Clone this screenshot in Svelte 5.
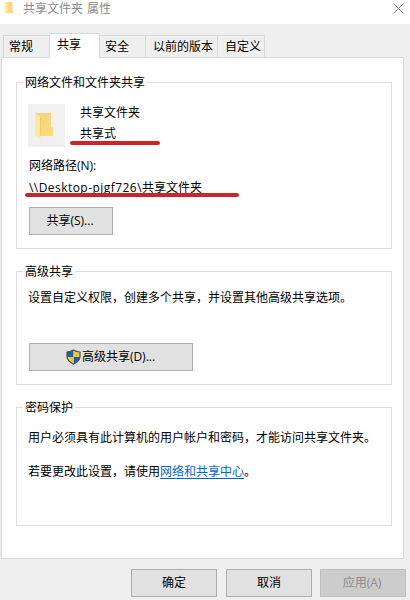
<script>
  const tabs = [
    { label: '常规', width: 46 },
    { label: '共享', width: 51, active: true },
    { label: '安全', width: 46 },
    { label: '以前的版本', width: 72 },
    { label: '自定义', width: 47 }
  ];
</script>

<div class="window">
  <header class="titlebar">
    <svg class="title-icon" width="10" height="14" viewBox="0 0 10 14">
      <path d="M2 1h6.500v8l1 .5V12H2z" fill="#f9d880" />
      <path d="M0.500 1l2.800 1.800v10.700L0.500 11.600z" fill="#fdeaa9" />
    </svg>
    <h1>共享文件夹 属性</h1>
    <svg class="close" width="11" height="11" viewBox="0 0 11 11">
      <path d="M.5.5l10 10M10.5.5l-10 10" stroke="#858585" stroke-width="1" fill="none" />
    </svg>
  </header>

  <nav class="tabs">
    {#each tabs as tab}
      <div class="tab" class:active={tab.active} style:width="{tab.width}px">{tab.label}</div>
    {/each}
  </nav>

  <main class="panel">
    <fieldset class="network">
      <legend>网络文件和文件夹共享</legend>
      <div class="folder">
        <div class="thumb">
          <svg width="37" height="43" viewBox="0 0 37 43">
            <defs>
              <linearGradient id="fold" x1="0" y1="0" x2="1" y2="1">
                <stop offset="0" stop-color="#f0d080" />
                <stop offset="1" stop-color="#ffdc77" />
              </linearGradient>
            </defs>
            <path d="M7.500 9H23v13.500l2.200 1.500V32H12L7.500 29z" fill="url(#fold)" />
            <path d="M7.200 9l5.300 3.500v23L7.200 31.500z" fill="#ffe9a2" />
            <path d="M12.500 13v18.500" stroke="#e8c76c" stroke-width=".8" />
          </svg>
        </div>
        <div class="names">
          <div>共享文件夹</div>
          <div class="marked">共享式<i class="stroke short"></i></div>
        </div>
      </div>
      <div class="label">网络路径(N):</div>
      <div class="path marked"><span class="host">\\Desktop-pjgf726\</span>共享文件夹<i class="stroke long"></i></div>
      <button class="share">共享(S)...</button>
    </fieldset>

    <fieldset class="advanced">
      <legend>高级共享</legend>
      <p>设置自定义权限，创建多个共享，并设置其他高级共享选项。</p>
      <button class="adv">
        <svg width="15" height="16" viewBox="0 0 15 16">
          <defs>
            <clipPath id="shield">
              <path d="M7.500 1C5.800 2.300 3.500 2.900 1 3v4.500c0 3.500 3.300 6 6.500 7.700C10.700 13.500 14 11 14 7.500V3C11.500 2.900 9.200 2.300 7.500 1z" />
            </clipPath>
          </defs>
          <g clip-path="url(#shield)">
            <path d="M0 0h7.500v8H0zM7.500 8H15v8H7.500z" fill="#1463b0" />
            <path d="M7.500 0H15v8H7.500zM0 8h7.500v8H0z" fill="#fbc33c" />
          </g>
          <path d="M7.500 1C5.800 2.300 3.500 2.900 1 3v4.500c0 3.500 3.300 6 6.500 7.700C10.700 13.500 14 11 14 7.500V3C11.500 2.900 9.200 2.300 7.500 1z" fill="none" stroke="#4b5257" stroke-width="1.200" />
        </svg>
        <span>高级共享(D)...</span>
      </button>
    </fieldset>

    <fieldset class="password">
      <legend>密码保护</legend>
      <p>用户必须具有此计算机的用户帐户和密码，才能访问共享文件夹。</p>
      <p class="second">若要更改此设置，请使用<span class="link">网络和共享中心</span>。</p>
    </fieldset>
  </main>

  <footer>
    <button>确定</button>
    <button>取消</button>
    <button class="disabled" disabled>应用(A)</button>
  </footer>
</div>

<style>
  :global(body) {
    margin: 0;
    overflow: hidden;
  }
  .window {
    box-sizing: border-box;
    width: 410px;
    height: 600px;
    overflow: hidden;
    background: #efefef;
    color: #000;
    font: 12px/16px 'Open Sans', 'Noto Sans CJK SC', sans-serif;
    white-space: nowrap;
  }
  .titlebar {
    display: flex;
    align-items: flex-start;
    height: 24px;
    background: #fff;
  }
  .title-icon {
    margin: 1px 0 0 4px;
  }
  h1 {
    margin: 0 0 0 9px;
    font-size: 12px;
    font-weight: 400;
    line-height: 18px;
    word-spacing: 1px;
    color: #8c8c8c;
  }
  .close {
    margin: 3px 6px 0 auto;
  }
  .tabs {
    display: flex;
    align-items: flex-end;
    height: 33px;
    padding-left: 3px;
  }
  .tab {
    box-sizing: border-box;
    height: 22px;
    border: 1px solid #d9d9d9;
    border-width: 1px 1px 0 0;
    padding-left: 6px;
    line-height: 22px;
  }
  .tab:first-child {
    border-left-width: 1px;
    border-right: 0;
    padding-left: 5px;
  }
  .tab:nth-child(3) {
    padding-left: 5px;
  }
  .tab:nth-child(4),
  .tab:last-child {
    padding-left: 7px;
  }
  .tab.active {
    position: relative;
    height: 25px;
    margin-bottom: -1px;
    border-left-width: 1px;
    padding-left: 7px;
    background: #fff;
    line-height: 21px;
  }
  .panel {
    box-sizing: border-box;
    width: 403px;
    height: 502px;
    margin-left: 1px;
    border: 1px solid #d9d9d9;
    padding: 16px 11px 0 14px;
    background: #fff;
  }
  fieldset {
    box-sizing: border-box;
    width: 376px;
    min-width: 0;
    margin: 0;
    border: 1px solid #dcdcdc;
    padding: 0 0 0 12px;
  }
  legend {
    height: 17px;
    margin-left: -6px;
    padding: 0 2px;
    line-height: 17px;
  }
  .network {
    height: 175px;
  }
  .advanced {
    height: 122px;
    margin-top: 14px;
  }
  .password {
    height: 127px;
    margin-top: 14px;
  }
  .folder {
    display: flex;
    height: 43px;
    margin: 13px 0 0 -1px;
  }
  .thumb {
    width: 37px;
    height: 43px;
    background: #f0f0f0;
  }
  .names {
    display: flex;
    flex-direction: column;
    gap: 5px;
    margin-left: 15px;
    padding-top: 1px;
  }
  .label {
    margin-top: 11px;
  }
  .path {
    margin-top: 6px;
  }
  .host {
    display: inline-block;
    width: 113px;
    letter-spacing: 0.45px;
  }
  .marked {
    position: relative;
  }
  .stroke {
    position: absolute;
    height: 4px;
    border-radius: 2px;
    background: #cc2428;
  }
  .short {
    left: -10px;
    top: 15px;
    width: 90px;
  }
  .long {
    left: -4px;
    top: 13px;
    width: 214px;
  }
  button {
    display: flex;
    align-items: center;
    justify-content: center;
    box-sizing: border-box;
    width: 86px;
    height: 28px;
    border: 1px solid #adadad;
    border-radius: 0;
    padding: 0;
    background: #e1e1e1;
    color: #000;
    font: inherit;
  }
  .share {
    width: 84px;
    margin-top: 11px;
    padding-right: 2px;
  }
  .adv {
    width: 164px;
    margin-top: 37px;
    padding-right: 1px;
    gap: 1px;
  }
  p {
    margin: 14px 0 0 -1px;
  }
  .advanced p {
    margin-top: 10px;
  }
  .second {
    margin-top: 18px;
  }
  .link {
    color: #0066cc;
    text-decoration: underline;
    text-underline-offset: 2px;
  }
  footer {
    display: flex;
    gap: 8px;
    padding: 10px 0 0 131px;
  }
  footer button:nth-child(2) {
    margin-left: 1px;
  }
  .disabled {
    padding-right: 2px;
    border-color: #bfbfbf;
    background: #cccccc;
    color: #8c8c8c;
  }
</style>
